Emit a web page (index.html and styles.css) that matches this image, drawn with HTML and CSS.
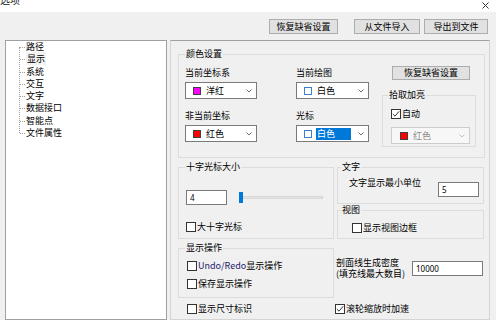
FILE: index.html
```html
<!DOCTYPE html>
<html lang="zh-CN">
<head>
<meta charset="utf-8">
<title>选项</title>
<link rel="stylesheet" href="styles.css">
</head>
<body>
<div class="titlebar">
  <span class="title">选项</span>
  <svg class="close" width="7" height="7" viewBox="0 0 7 7"><path d="M0.5 0.5L6.5 6.5M6.5 0.5L0.5 6.5" stroke="#333" stroke-width="1"/></svg>
</div>
<div class="toolbar">
  <button class="btn btn-reset">恢复缺省设置</button>
  <button class="btn btn-import">从文件导入</button>
  <button class="btn btn-export">导出到文件</button>
</div>
<div class="main">
  <div class="tree">
    <ul class="tree-list">
      <li>路径</li>
      <li><span class="sel">显示</span></li>
      <li>系统</li>
      <li>交互</li>
      <li>文字</li>
      <li>数据接口</li>
      <li>智能点</li>
      <li>文件属性</li>
    </ul>
  </div>
  <div class="panel">
    <div class="group g-color">
      <div class="group-title">颜色设置</div>
      <div class="color-body">
        <div class="color-grid">
          <div class="color-row">
            <div class="field f1">
              <div class="field-label">当前坐标系</div>
              <div class="combo"><span class="swatch sw-magenta"></span><span class="combo-text">洋红</span><svg class="chev" width="6" height="4" viewBox="0 0 6 4"><polyline points="0.5,0.5 3,3 5.5,0.5" fill="none" stroke="#707070"/></svg></div>
            </div>
            <div class="field f2">
              <div class="field-label">当前绘图</div>
              <div class="combo"><span class="swatch sw-white"></span><span class="combo-text">白色</span><svg class="chev" width="6" height="4" viewBox="0 0 6 4"><polyline points="0.5,0.5 3,3 5.5,0.5" fill="none" stroke="#707070"/></svg></div>
            </div>
          </div>
          <div class="color-row row-b">
            <div class="field f1">
              <div class="field-label">非当前坐标</div>
              <div class="combo"><span class="swatch sw-red"></span><span class="combo-text">红色</span><svg class="chev" width="6" height="4" viewBox="0 0 6 4"><polyline points="0.5,0.5 3,3 5.5,0.5" fill="none" stroke="#707070"/></svg></div>
            </div>
            <div class="field f2">
              <div class="field-label">光标</div>
              <div class="combo combo-focus"><span class="swatch sw-white"></span><span class="combo-text hl">白色</span><svg class="chev" width="6" height="4" viewBox="0 0 6 4"><polyline points="0.5,0.5 3,3 5.5,0.5" fill="none" stroke="#707070"/></svg></div>
            </div>
          </div>
        </div>
        <div class="color-side">
          <button class="btn btn-side">恢复缺省设置</button>
          <div class="group g-pick">
            <div class="group-title">拾取加亮</div>
            <label class="check ck-auto"><span class="box"><svg width="8" height="8" viewBox="0 0 8 8"><polyline points="0.8,4 3,6.2 7.2,1.2" fill="none" stroke="#333" stroke-width="1"/></svg></span>自动</label>
            <div class="combo combo-disabled"><span class="swatch sw-red"></span><span class="combo-text">红色</span><svg class="chev" width="6" height="4" viewBox="0 0 6 4"><polyline points="0.5,0.5 3,3 5.5,0.5" fill="none" stroke="#c0c0c0"/></svg></div>
          </div>
        </div>
      </div>
    </div>

    <div class="lower-row row1">
      <div class="col-left">
        <div class="group g-cross">
          <div class="group-title">十字光标大小</div>
          <div class="cross-row">
            <div class="input in-size">4</div>
            <div class="slider"><span class="thumb"></span><span class="track"></span></div>
          </div>
          <label class="check ck-big"><span class="box"></span>大十字光标</label>
        </div>
      </div>
      <div class="col-right">
        <div class="group g-text">
          <div class="group-title">文字</div>
          <div class="text-row">
            <span class="text-label">文字显示最小单位</span>
            <div class="input in-min">5</div>
          </div>
        </div>
        <div class="group g-view">
          <div class="group-title">视图</div>
          <label class="check ck-view"><span class="box"></span>显示视图边框</label>
        </div>
      </div>
    </div>

    <div class="lower-row row2">
      <div class="col-left">
        <div class="group g-ops">
          <div class="group-title">显示操作</div>
          <label class="check ck-op"><span class="box"></span><span class="latin">Undo/Redo</span>显示操作</label>
          <label class="check ck-op"><span class="box"></span>保存显示操作</label>
        </div>
      </div>
      <div class="col-right">
        <div class="density">
          <div class="density-label"><div class="dl-line">剖面线生成密度</div><div class="dl-line">(填充线最大数目)</div></div>
          <div class="input in-density">10000</div>
        </div>
      </div>
    </div>

    <div class="lower-row row3">
      <div class="col-left">
        <label class="check ck-dim"><span class="box"></span>显示尺寸标识</label>
      </div>
      <div class="col-right">
        <label class="check ck-wheel"><span class="box"><svg width="8" height="8" viewBox="0 0 8 8"><polyline points="0.8,4 3,6.2 7.2,1.2" fill="none" stroke="#333" stroke-width="1"/></svg></span>滚轮缩放时加速</label>
      </div>
    </div>
  </div>
</div>
</body>
</html>
```

FILE: styles.css
```css
* { box-sizing: border-box; }

body {
  margin: 0;
  width: 496px;
  height: 320px;
  overflow: hidden;
  background: #f0f0f0;
  color: #000;
  font-family: "Noto Sans CJK SC", "Noto Sans", sans-serif;
  font-size: 9px;
  line-height: 12px;
}

.titlebar {
  height: 12px;
  background: #ffffff;
  display: flex;
  justify-content: space-between;
  overflow: hidden;
}

.title {
  font-size: 10px;
  line-height: 10px;
  margin-top: -5px;
  color: #222;
}

.close {
  margin: 2px 7px 0 0;
}

.toolbar {
  height: 28px;
  display: flex;
  justify-content: flex-end;
  align-items: flex-start;
  padding: 7px 8px 0 0;
}

.btn {
  font: inherit;
  font-size: 9px;
  line-height: 13px;
  height: 15px;
  padding: 0;
  margin: 0;
  border: 1px solid #adadad;
  background: #e1e1e1;
  color: #000;
  text-align: center;
}

.btn-reset { width: 69px; }
.btn-import { width: 66px; margin-left: 16px; }
.btn-export { width: 64px; margin-left: 4px; }

.main {
  display: flex;
  padding-left: 5px;
  height: 280px;
}

.tree {
  width: 162px;
  height: 280px;
  border: 1px solid #a0a0a0;
  background: #ffffff;
}

.tree-list {
  list-style: none;
  margin: 0;
  padding: 0;
  position: relative;
}

.tree-list::before {
  content: "";
  position: absolute;
  left: 13px;
  top: 6px;
  height: 86px;
  border-left: 1px dotted #a0a0a0;
}

.tree-list li {
  position: relative;
  height: 12.3px;
  line-height: 12.3px;
  padding-left: 20px;
  white-space: nowrap;
}

.tree-list li::before {
  content: "";
  position: absolute;
  left: 14px;
  top: 6px;
  width: 5px;
  border-top: 1px dotted #a0a0a0;
}

.sel {
  background: #f2f2f2;
  padding: 0 1px;
}

.panel {
  margin-left: 3px;
  width: 320px;
  height: 280px;
  border: 1px solid #d4d4d4;
  border-top-color: #a0a0a0;
  padding: 13px 4px 0 7px;
}

.group {
  border: 1px solid #dcdcdc;
}

.group-title {
  margin-top: -7px;
  margin-left: 6px;
  height: 12px;
  line-height: 12px;
  padding: 0 1px;
  width: fit-content;
  background: #f0f0f0;
  white-space: nowrap;
}

.g-color {
  height: 104px;
}

.color-body {
  display: flex;
  padding-left: 6px;
}

.color-grid {
  padding-top: 7px;
}

.color-row {
  display: flex;
  gap: 39px;
}

.row-b {
  margin-top: 11px;
}

.field.f1 { width: 72px; }
.field.f2 { width: 73px; }

.field-label {
  height: 12px;
  line-height: 12px;
  margin-bottom: 3px;
  white-space: nowrap;
}

.combo {
  height: 17px;
  border: 1px solid #7a7a7a;
  background: #ffffff;
  display: flex;
  align-items: center;
  padding-left: 7px;
  padding-right: 4px;
}

.swatch {
  width: 8px;
  height: 8px;
  border: 1px solid #404040;
  flex: none;
}

.sw-magenta { background: #ff00ff; }
.sw-red { background: #ff0000; }
.sw-white { background: #ffffff; border-color: #3c7fd1; }

.combo-text {
  margin-left: 4px;
  height: 12px;
  line-height: 12px;
  padding-left: 1px;
  flex: 1;
}

.combo-text.hl {
  background: #0078d7;
  color: #ffffff;
  flex: 0 0 35px;
}

.chev {
  margin-left: auto;
  flex: none;
}

.combo-disabled {
  background: #f7f7f7;
  border-color: #cccccc;
  color: #8c8c8c;
  width: 79px;
  margin-left: 8px;
  margin-top: 7px;
  padding-left: 8px;
}

.color-side {
  margin-left: 13px;
  width: 94px;
  padding-top: 6px;
}

.btn-side {
  display: block;
  width: 78px;
  height: 14px;
  line-height: 12px;
  margin-left: 10px;
}

.g-pick {
  margin-top: 15px;
  height: 52px;
}

.g-pick .group-title {
  margin-left: 5px;
}

.check {
  display: flex;
  align-items: center;
  height: 12px;
  line-height: 12px;
  white-space: nowrap;
}

.box {
  width: 10px;
  height: 10px;
  border: 1px solid #333333;
  background: #ffffff;
  margin-right: 1px;
  display: flex;
  align-items: center;
  justify-content: center;
  flex: none;
}

.ck-auto {
  margin-top: 7px;
  margin-left: 8px;
}

.lower-row {
  display: flex;
  gap: 3px;
}

.col-left { width: 156px; }
.col-right { width: 147px; }

.row1 { margin-top: 9px; }
.row2 { margin-top: 9px; }
.row3 { margin-top: 5px; }

.g-cross {
  height: 72px;
}

.cross-row {
  display: flex;
  align-items: center;
  margin-top: 17px;
  padding-left: 7px;
}

.input {
  height: 15px;
  border: 1px solid #7a7a7a;
  background: #ffffff;
  font-family: "Noto Sans", "Liberation Sans", sans-serif;
  font-size: 8px;
  line-height: 13px;
  padding-left: 3px;
}

.in-size { width: 41px; }

.slider {
  display: flex;
  align-items: center;
  width: 84px;
  height: 12px;
  margin-left: 12px;
}

.thumb {
  width: 4px;
  height: 11px;
  background: #0078d7;
  flex: none;
}

.track {
  flex: 1;
  height: 3px;
  background: #e7e7e7;
  border: 1px solid #d6d6d6;
}

.ck-big {
  margin-top: 16px;
  margin-left: 7px;
}

.g-text {
  height: 37px;
}

.g-text .group-title,
.g-view .group-title {
  margin-left: 3px;
}

.text-row {
  display: flex;
  align-items: flex-start;
  margin-top: 4px;
  padding-left: 11px;
}

.text-label {
  white-space: nowrap;
}

.in-min {
  width: 41px;
  margin-left: auto;
  margin-right: 4px;
  margin-top: 5px;
}

.g-view {
  height: 29px;
  margin-top: 6px;
}

.ck-view {
  margin-top: 6px;
  margin-left: 14px;
}

.g-ops {
  height: 50px;
}

.ck-op {
  margin-top: 6px;
  margin-left: 8px;
}

.latin {
  color: #22226e;
}

.density {
  display: flex;
  align-items: center;
  margin-top: 9px;
  margin-left: -1px;
}

.density-label {
  flex: none;
  white-space: nowrap;
}

.dl-line {
  height: 11px;
  line-height: 11px;
}

.in-density {
  width: 71px;
  margin-left: auto;
  margin-right: 1px;
}

.ck-dim {
  margin-left: 9px;
}

.ck-wheel {
  margin-left: -2px;
}
```
